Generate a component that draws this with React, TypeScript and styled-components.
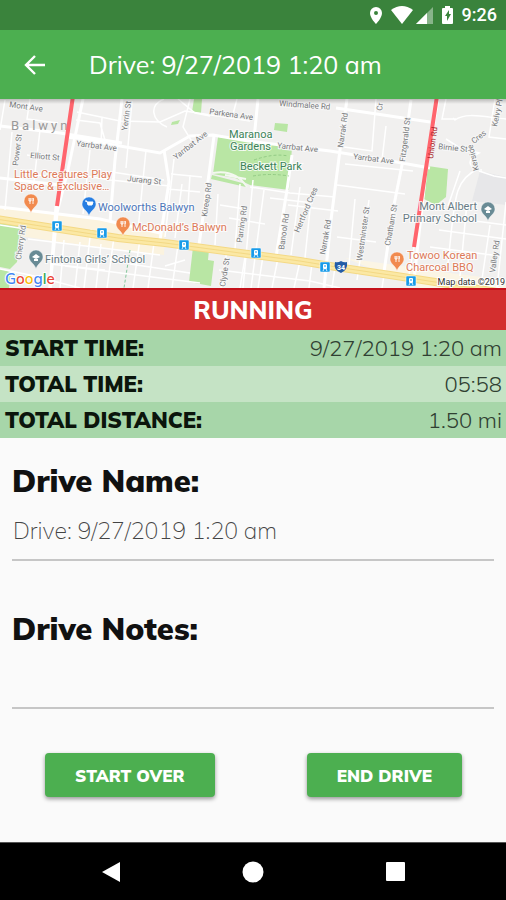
import React, { useState } from 'react';
import styled, { createGlobalStyle } from 'styled-components';

const sans = "Mulish, Muli, Lato, 'Open Sans', sans-serif";

const GlobalStyle = createGlobalStyle`
  *, *::before, *::after { box-sizing: border-box; }
  body { margin: 0; background: #fafafa; font-family: ${sans}; }
`;

const Screen = styled.div`
  display: flex;
  flex-direction: column;
  min-height: 100vh;
`;

const StatusBar = styled.div`
  display: flex;
  align-items: center;
  justify-content: flex-end;
  height: 30px;
  padding: 0 9px;
  background: #3a833c;
  color: #fff;
  font: 500 18px/32px Roboto, sans-serif;
`;

const StatusIcons = styled.svg`
  display: block;
  width: 88px;
  height: 30px;
  margin-right: 6px;
`;

const AppBar = styled.header`
  display: flex;
  align-items: center;
  gap: 41px;
  height: 69px;
  padding: 0 22px;
  background: #4caf50;
  color: #fff;
`;

const IconButton = styled.button`
  display: flex;
  padding: 0;
  border: 0;
  background: none;
  color: inherit;
  cursor: pointer;
`;

const Title = styled.h1`
  margin: 0;
  font-size: 25px;
  font-weight: 400;
  line-height: 32px;
`;

const MapView = styled.svg`
  display: block;
  width: 100%;
  height: 189px;
  background: #f1f0ef;
  font-family: Roboto, sans-serif;
`;

const RunningBanner = styled.div`
  border-top: 2px solid #c4111a;
  background: #d32f2f;
  color: #fff;
  font-size: 25px;
  font-weight: 800;
  line-height: 40px;
  text-align: center;
`;

const Stats = styled.dl`
  margin: 0;
`;

const StatRow = styled.div<{ $pale?: boolean }>`
  display: flex;
  justify-content: space-between;
  padding: 0 4px 0 5px;
  background: ${(p) => (p.$pale ? '#c5e3c5' : '#a7d6a9')};
  line-height: 36px;
`;

const StatName = styled.dt`
  color: #0b150c;
  font-size: 22px;
  font-weight: 900;
`;

const StatValue = styled.dd`
  margin: 0;
  color: #304032;
  font-size: 22px;
  font-weight: 300;
`;

const Form = styled.form`
  display: flex;
  flex: 1;
  flex-direction: column;
  gap: 44px;
  padding: 19px 12px 44px;
`;

const Field = styled.div`
  display: flex;
  flex-direction: column;
  padding-top: 4px;
`;

const FieldLabel = styled.label`
  color: #111;
  font-size: 31px;
  font-weight: 900;
  line-height: 40px;
`;

const FieldInput = styled.input`
  width: 100%;
  height: 60px;
  padding: 0 1px;
  border: 0;
  border-bottom: 2px solid #c6c6c6;
  background: transparent;
  color: #444;
  font-family: ${sans};
  font-size: 23px;
  font-weight: 200;
  outline: 0;
`;

const Actions = styled.div`
  display: flex;
  justify-content: space-between;
  padding: 0 32px 0 33px;
`;

const ActionButton = styled.button`
  height: 44px;
  padding: 0 30px;
  border: 0;
  border-radius: 4px;
  background: #4caf50;
  box-shadow: 0 2px 4px rgba(0, 0, 0, 0.4);
  color: #fff;
  font-family: ${sans};
  font-size: 17px;
  font-weight: 900;
  cursor: pointer;
`;

const NavBar = styled.nav`
  display: flex;
  align-items: center;
  justify-content: center;
  gap: 118px;
  height: 58px;
  border-top: 1px solid #555;
  background: #000;
  color: #fff;
`;

type Label = [string, number, number, number];

const streetLabels: Label[] = [
  ['Mont Ave', 9, 107, 8],
  ['Yarrbat Ave', 76, 146, 7],
  ['Elliott St', 30, 158, 5],
  ['Jurang St', 127, 181, 6],
  ['Parkena Ave', 209, 114, 8],
  ['Yarrbat Ave', 277, 148, 6],
  ['Windmalee Rd', 279, 106, 4],
  ['Yarrbat Ave', 353, 159, 7],
  ['Birnie St', 438, 149, 6],
  ['Power St', 18, 166, -83],
  ['Yerrin St', 127, 131, -82],
  ['Yarrbat Ave', 176, 160, -38],
  ['Fitzgerald St', 405, 162, -83],
  ['Narrak Rd', 343, 148, -82],
  ['Kireep Rd', 207, 217, -82],
  ['Parring Rd', 242, 243, -82],
  ['Banool Rd', 284, 250, -82],
  ['Narrak Rd', 325, 255, -80],
  ['Clyde St', 225, 287, -81],
  ['Westminster St', 362, 261, -82],
  ['Chatham St', 390, 246, -80],
  ['Cherry Rd', 21, 260, -82],
  ['Kelvy Pl', 497, 127, -78],
  ['Cr', 382, 111, -83],
  ['Valley Rd', 495, 273, -82],
  ['Hertford Cres', 299, 233, -67],
];

const majorRoads = [
  'M0 126 L60 133 122 143 M68 137 L160 153 190 136 213 135 248 141 330 151 374 158 430 168',
  'M122 99 L115 160 110 222 M83 99 L68 170 57 213 50 288 M164 150 L169 182 160 240',
  'M214 136 L209 174 199 245 M258 99 L254 139 M292 155 L287 190 276 257',
  'M347 99 L340 150 331 220 324 288 M411 100 L402 165 393 210 384 272',
  'M438 99 L426 170 414 280 M336 108 L370 113 430 122',
  'M0 207 L100 219 160 233 M56 206 L50 288 M0 178 L60 185',
];

const minorRoads = [
  'M5 100 L0 130 M30 99 L27 119 58 123 M12 132 L5 210 M40 130 L33 190 M27 155 L60 160 M20 173 L56 177',
  'M77 112 L120 121 160 122 185 111 250 121 M76 120 L100 123 105 140 M102 117 L101 147',
  'M90 150 L83 214 M74 174 L110 180 170 186 M112 172 L164 180 M146 150 L138 230 M132 101 L126 168',
  'M164 99 C149 105 151 120 167 127 M178 99 L195 113 210 116 M190 99 L183 127 194 145 M237 99 L232 118',
  'M171 174 L202 177 M168 189 L200 192 M174 159 L165 237 M182 184 L175 238 M190 175 L188 206',
  'M218 194 L215 245 M240 184 L235 249 M253 180 L243 288 M264 190 L251 288 M270 198 L313 203',
  'M250 187 L290 193 335 197 M220 205 L245 209 M229 218 L265 224 M288 205 L338 211 M300 187 L291 255',
  'M312 190 L305 258 M337 185 L405 194 M345 164 L413 171 M355 199 L349 265 M369 200 L357 280 M337 237 L376 242',
  'M386 126 L382 160 M376 99 L372 151 344 147 M453 118 L455 120 C466 112 484 117 506 119 M446 99 L442 119 456 119',
  'M495 99 L489 137 506 139 M446 139 L460 148 479 153 C464 160 470 170 482 170 M478 169 C453 180 455 200 448 263',
  'M479 171 L494 176 506 178 M460 171 L448 206 M444 217 L506 225 M439 230 L506 239 M467 203 L460 276',
  'M490 225 L481 286 M430 247 L500 256 M506 202 L497 288 M414 247 L408 280 M420 278 L500 288',
  'M0 269 L30 275 80 288 M28 239 L160 255 M50 264 L105 270 M64 240 L60 288 M80 242 L75 288 M91 229 L84 288',
  'M101 244 L96 288 M114 237 L107 288 M140 239 L133 288 M154 243 L148 288 M65 266 L200 283 M130 264 L190 273',
  'M178 245 L172 288 M165 266 L185 260 M227 250 L221 288 M245 257 L240 288 M263 256 L258 288 M278 258 L272 288',
  'M300 261 L294 288 M312 263 L309 288 M335 267 L332 288 M219 270 L310 281 340 288 M384 275 L382 288 M0 225 L26 229',
];

const highway = 'M-4 219 L60 229 118 238 165 243 225 251 300 261 336 267 390 275 448 284 510 294';

interface PinProps {
  x: number;
  y: number;
  color: string;
  kind: 'food' | 'shop' | 'school';
}

function Pin({ x, y, color, kind }: PinProps) {
  return (
    <g transform={`translate(${x} ${y})`}>
      <path d="M0 10 C-1 5 -7 3 -7 -2 A7 7 0 0 1 7 -2 C7 3 1 5 0 10Z" fill={color} stroke="#fff" strokeOpacity=".6" strokeWidth=".7" />
      {kind === 'food' && <path d="M-2 -5v3M-1 -5v6M0 -5v3M-2 -2h2M2 -5v6M2 -5q1 2 0 3" stroke="#fff" strokeWidth=".9" fill="none" />}
      {kind === 'shop' && <path d="M-4 -5h2l1 4h4l1 -3h-5" stroke="#fff" strokeWidth="1" fill="#fff" />}
      {kind === 'school' && <path d="M-4 -2L0 -5 4 -2 0 0ZM-2 0v2h4V0" fill="#fff" />}
    </g>
  );
}

function TramStop({ x, y }: { x: number; y: number }) {
  return (
    <g transform={`translate(${x} ${y})`}>
      <rect x="-5" y="-5" width="10" height="10" rx="1" fill="#199be8" stroke="#fff" strokeOpacity=".5" />
      <rect x="-2" y="-3" width="4" height="5" rx="1" fill="#fff" />
      <path d="M-2 4l1-2M2 4l-1-2" stroke="#d7f0ff" strokeWidth="1" />
      <path d="M-1 -1h2" stroke="#199be8" />
    </g>
  );
}

function RouteMap() {
  return (
    <MapView viewBox="0 99 506 189" preserveAspectRatio="xMidYMid slice" role="img" aria-label="Map of the drive">
      <defs>
        <linearGradient id="barShadow" x1="0" x2="0" y1="0" y2="1">
          <stop offset="0" stopColor="#000" stopOpacity=".22" />
          <stop offset="1" stopColor="#000" stopOpacity="0" />
        </linearGradient>
      </defs>
      <path d="M0 206 L60 213 115 222 165 233 164 255 60 242 0 233Z" fill="#fbf3df" />
      <path d="M345 258 L395 265 450 273 506 280 V288 H420Z" fill="#fbf5e5" />
      <path d="M480 171 L506 177 V205 L472 201Z" fill="#e7e7e9" />
      <g fill="#b9e6a4">
        <path d="M218 137 L292 147 289 190 250 185 235 178 213 174Z" />
        <path d="M212 175 L231 180 246 184 246 187 211 179Z" />
        <path d="M194 99h8l-1 14-9-1ZM275 123l13 1-1 8-13-2ZM172 122l8-2-2 4-7 1Z" />
        <path d="M428 166 L448 169 446 197 436 205 424 199Z" />
        <path d="M193 247 L209 250 208 260 214 261 211 286 189 282Z" />
        <path d="M0 218 L23 223 17 262 10 269 0 267Z" />
        <path d="M0 269 L11 272 9 288H0Z" />
      </g>
      {minorRoads.map((d) => (
        <path key={d} d={d} fill="none" stroke="#fff" strokeWidth="1.5" />
      ))}
      {majorRoads.map((d) => (
        <path key={d} d={d} fill="none" stroke="#fff" strokeWidth="3" />
      ))}
      <path d="M213 173 Q235 169 247 187 M225 175 L246 179" fill="none" stroke="#f4f8f0" strokeWidth="2" />
      <path d="M254 160 Q274 153 288 156 M253 176 Q270 173 289 176" fill="none" stroke="#89c47c" strokeWidth=".8" strokeDasharray="3 2" />
      <path d="M130 250 L124 288" stroke="#84c89c" strokeDasharray="3 2" />
      <path d={highway} fill="none" stroke="#f4d985" strokeWidth="8" />
      <path d={highway} fill="none" stroke="#fbe8a4" strokeWidth="6" />
      <path d={highway} fill="none" stroke="#f1d47c" strokeWidth=".8" />
      <g fill="#77797b" fontSize="8" stroke="#f7f7f7" strokeWidth="2" paintOrder="stroke">
        {streetLabels.map(([name, x, y, angle]) => (
          <text key={`${name}-${x}`} transform={`translate(${x} ${y}) rotate(${angle})`}>{name}</text>
        ))}
        <text transform="translate(479 170) rotate(-104)">Kerside</text>
        <text transform="translate(474 144) rotate(-38)">Cres</text>
      </g>
      <text x="11" y="130" fontSize="13" letterSpacing="3" fill="#999">Balwyn</text>
      <path d="M73 96 L57 206 M437 96 L414 247" fill="none" stroke="#ff656d" strokeWidth="4" />
      <text transform="translate(433 159) rotate(-82)" fontSize="8" fill="#a51f2a">Union Rd</text>
      <g stroke="#fff" strokeWidth="2" strokeOpacity=".8" paintOrder="stroke" fontSize="11">
        <g fill="#3c8359">
          <text x="229" y="138">Maranoa</text>
          <text x="230" y="150">Gardens</text>
          <text x="240" y="170">Beckett Park</text>
        </g>
        <g fill="#dd7957">
          <text x="14" y="178">Little Creatures Play</text>
          <text x="14" y="190">Space &amp; Exclusive…</text>
          <text x="132" y="231">McDonald’s Balwyn</text>
          <text x="407" y="259">Towoo Korean</text>
          <text x="406" y="271">Charcoal BBQ</text>
        </g>
        <text x="98" y="211" fill="#4c76b9">Woolworths Balwyn</text>
        <g fill="#687b84">
          <text x="45" y="263">Fintona Girls’ School</text>
          <text x="477" y="210" textAnchor="end">Mont Albert</text>
          <text x="477" y="222" textAnchor="end">Primary School</text>
        </g>
      </g>
      <Pin x={31} y={203} color="#f18a4e" kind="food" />
      <Pin x={89} y={206} color="#267de2" kind="shop" />
      <Pin x={123} y={226} color="#f18a4e" kind="food" />
      <Pin x={36} y={259} color="#698b95" kind="school" />
      <Pin x={397} y={261} color="#f18a4e" kind="food" />
      <Pin x={488} y={211} color="#698b95" kind="school" />
      <TramStop x={57} y={226} />
      <TramStop x={102} y={233} />
      <TramStop x={184} y={245} />
      <TramStop x={256} y={253} />
      <TramStop x={325} y={267} />
      <TramStop x={411} y={281} />
      <path d="M335 262 Q338 263 341 261 Q344 263 347 262 Q348 270 341 273 Q333 270 335 262Z" fill="#235ca7" />
      <text x="337" y="270" fontSize="7" fontWeight="700" fill="#fff">34</text>
      <text x="5" y="284" fontSize="15" fontWeight="600" stroke="#fff" strokeWidth="2" paintOrder="stroke" fontFamily={sans}>
        <tspan fill="#4285f4">G</tspan><tspan fill="#ea4335">o</tspan><tspan fill="#fbbc05">o</tspan><tspan fill="#4285f4">g</tspan><tspan fill="#34a853">l</tspan><tspan fill="#ea4335">e</tspan>
      </text>
      <text x="505" y="285" textAnchor="end" fontSize="9" fill="#333" stroke="#fff" strokeWidth="2" paintOrder="stroke">Map data ©2019</text>
      <rect x="-500" y="99" width="1600" height="5" fill="url(#barShadow)" />
    </MapView>
  );
}

export default function App() {
  const [name, setName] = useState('Drive: 9/27/2019 1:20 am');
  const [notes, setNotes] = useState('');

  return (
    <Screen>
      <GlobalStyle />
      <StatusBar>
        <StatusIcons viewBox="0 0 88 30" fill="#fff" aria-hidden="true">
          <path fillRule="evenodd" d="M8 7a6 6 0 0 0-6 6c0 5 6 11 6 11s6-6 6-11a6 6 0 0 0-6-6Zm0 4a2 2 0 1 1 0 4 2 2 0 0 1 0-4Z" />
          <path d="M23 10q11-8 22 0L34 24Z" />
          <path d="M65 7v17H48Z" opacity=".4" />
          <path d="M59 13v11H48Z" />
          <path fillRule="evenodd" d="M77 6h5v2h2q1 0 1 1v14q0 1-1 1h-9q-1 0-1-1V9q0-1 1-1h2Zm4 4-4 6h2v5l4-7h-2Z" />
        </StatusIcons>
        <span>9:26</span>
      </StatusBar>
      <AppBar>
        <IconButton type="button" aria-label="Back">
          <svg width="26" height="26" viewBox="0 0 26 26" fill="none" stroke="currentColor" strokeWidth="2.4">
            <path d="M23 13H5M13 4L4 13l9 9" />
          </svg>
        </IconButton>
        <Title>Drive: 9/27/2019 1:20 am</Title>
      </AppBar>
      <RouteMap />
      <RunningBanner>RUNNING</RunningBanner>
      <Stats>
        <StatRow><StatName>START TIME:</StatName><StatValue>9/27/2019 1:20 am</StatValue></StatRow>
        <StatRow $pale><StatName>TOTAL TIME:</StatName><StatValue>05:58</StatValue></StatRow>
        <StatRow><StatName>TOTAL DISTANCE:</StatName><StatValue>1.50 mi</StatValue></StatRow>
      </Stats>
      <Form onSubmit={(e) => e.preventDefault()}>
        <Field>
          <FieldLabel htmlFor="drive-name">Drive Name:</FieldLabel>
          <FieldInput id="drive-name" value={name} onChange={(e) => setName(e.target.value)} />
        </Field>
        <Field>
          <FieldLabel htmlFor="drive-notes">Drive Notes:</FieldLabel>
          <FieldInput id="drive-notes" value={notes} onChange={(e) => setNotes(e.target.value)} />
        </Field>
        <Actions>
          <ActionButton type="button">START OVER</ActionButton>
          <ActionButton type="button">END DRIVE</ActionButton>
        </Actions>
      </Form>
      <NavBar>
        <IconButton type="button" aria-label="System back">
          <svg width="24" height="24" viewBox="0 0 24 24" fill="currentColor"><path d="M21 2v20L3 12Z" /></svg>
        </IconButton>
        <IconButton type="button" aria-label="Home">
          <svg width="24" height="24" viewBox="0 0 24 24" fill="currentColor"><circle cx="12" cy="12" r="10.5" /></svg>
        </IconButton>
        <IconButton type="button" aria-label="Recent apps">
          <svg width="24" height="24" viewBox="0 0 24 24" fill="currentColor"><rect x="3" y="2" width="19" height="19" rx="1" /></svg>
        </IconButton>
      </NavBar>
    </Screen>
  );
}
